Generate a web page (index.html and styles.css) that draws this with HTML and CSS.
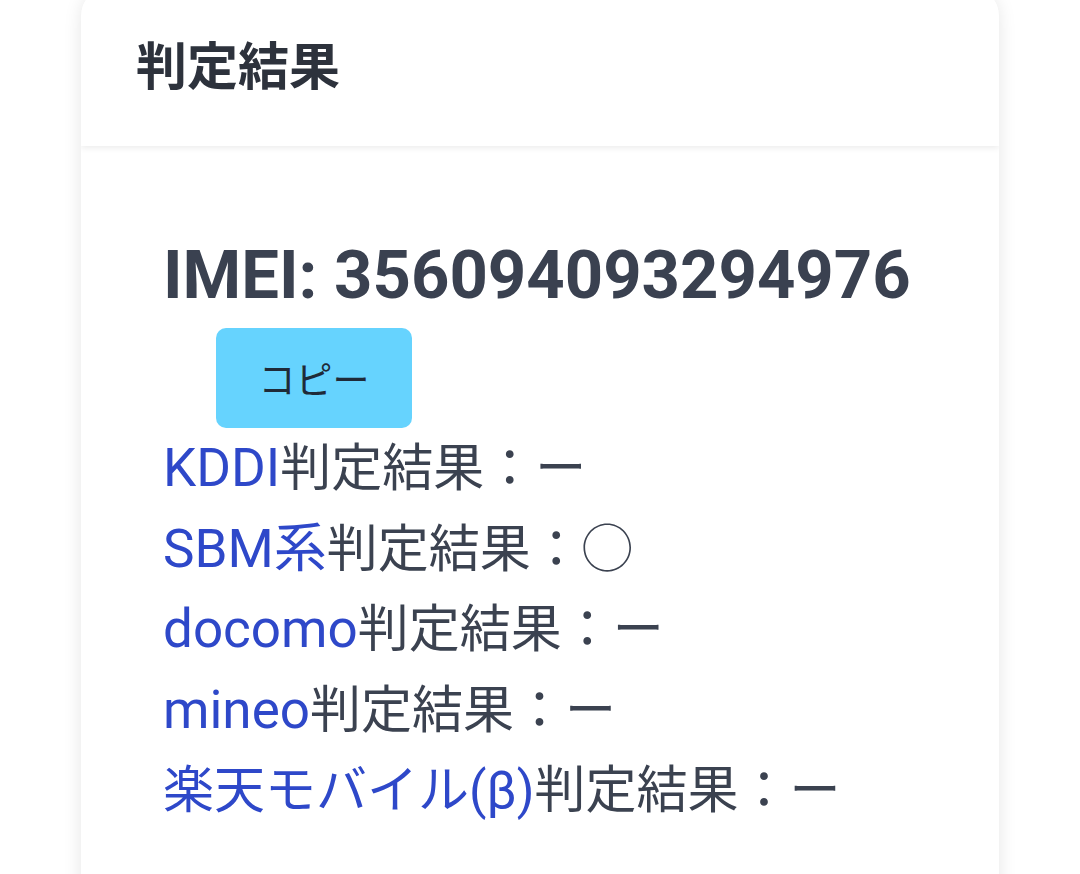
FILE: index.html
```html
<!DOCTYPE html>
<html lang="ja">
<head>
<meta charset="utf-8">
<link rel="stylesheet" href="styles.css">
</head>
<body>
<div class="page">
  <div class="card">
    <div class="card-header">
      <h2 class="card-title">判定結果</h2>
    </div>
    <div class="card-body">
      <h3 class="imei">IMEI: 356094093294976</h3>
      <button class="copy-btn">コピー</button>
      <ul class="results">
        <li><a class="carrier">KDDI</a>判定結果：ー</li>
        <li><a class="carrier">SBM系</a>判定結果：◯</li>
        <li><a class="carrier">docomo</a>判定結果：ー</li>
        <li><a class="carrier">mineo</a>判定結果：ー</li>
        <li><a class="carrier carrier-jp">楽天モバイル(β)</a>判定結果：ー</li>
      </ul>
    </div>
  </div>
</div>
</body>
</html>
```

FILE: styles.css
```css
html, body {
  margin: 0;
  padding: 0;
  background: #ffffff;
  font-family: Roboto, "Noto Sans CJK JP", sans-serif;
  color: #3b4250;
}
.page {
  height: 874px;
  overflow: hidden;
}
.card {
  margin: -12px 0 0 81px;
  width: 918px;
  height: 940px;
  background: #ffffff;
  border-radius: 28px;
  box-shadow: 0 2px 18px rgba(0, 0, 0, 0.10);
  overflow: hidden;
}
.card-header {
  height: 158px;
  display: flex;
  align-items: center;
  padding-left: 55px;
  background: #ffffff;
  box-shadow: 0 2px 6px rgba(0, 0, 0, 0.08);
  position: relative;
}
.card-title {
  margin: 0;
  font-size: 51px;
  font-weight: 700;
  color: #2d323c;
  padding-bottom: 8px;
}
.card-body {
  padding: 88px 0 0 82px;
}
.imei {
  margin: 0;
  font-size: 67px;
  line-height: 82px;
  font-weight: 700;
  color: #3a4150;
}
.copy-btn {
  display: block;
  margin: 12px 0 0 53px;
  width: 196px;
  height: 100px;
  border: none;
  border-radius: 10px;
  background: #66d3fe;
  color: #1f2a38;
  font-family: Roboto, "Noto Sans CJK JP", sans-serif;
  font-size: 37px;
  padding: 0;
}
.results {
  list-style: none;
  margin: 1px 0 0;
  padding: 0;
}
.results li {
  font-size: 51px;
  line-height: 80.5px;
  color: #3b4250;
}
.carrier {
  color: #2e48c9;
  font-size: 53px;
  line-height: 1;
}
.carrier-jp {
  font-size: 51px;
}
```
